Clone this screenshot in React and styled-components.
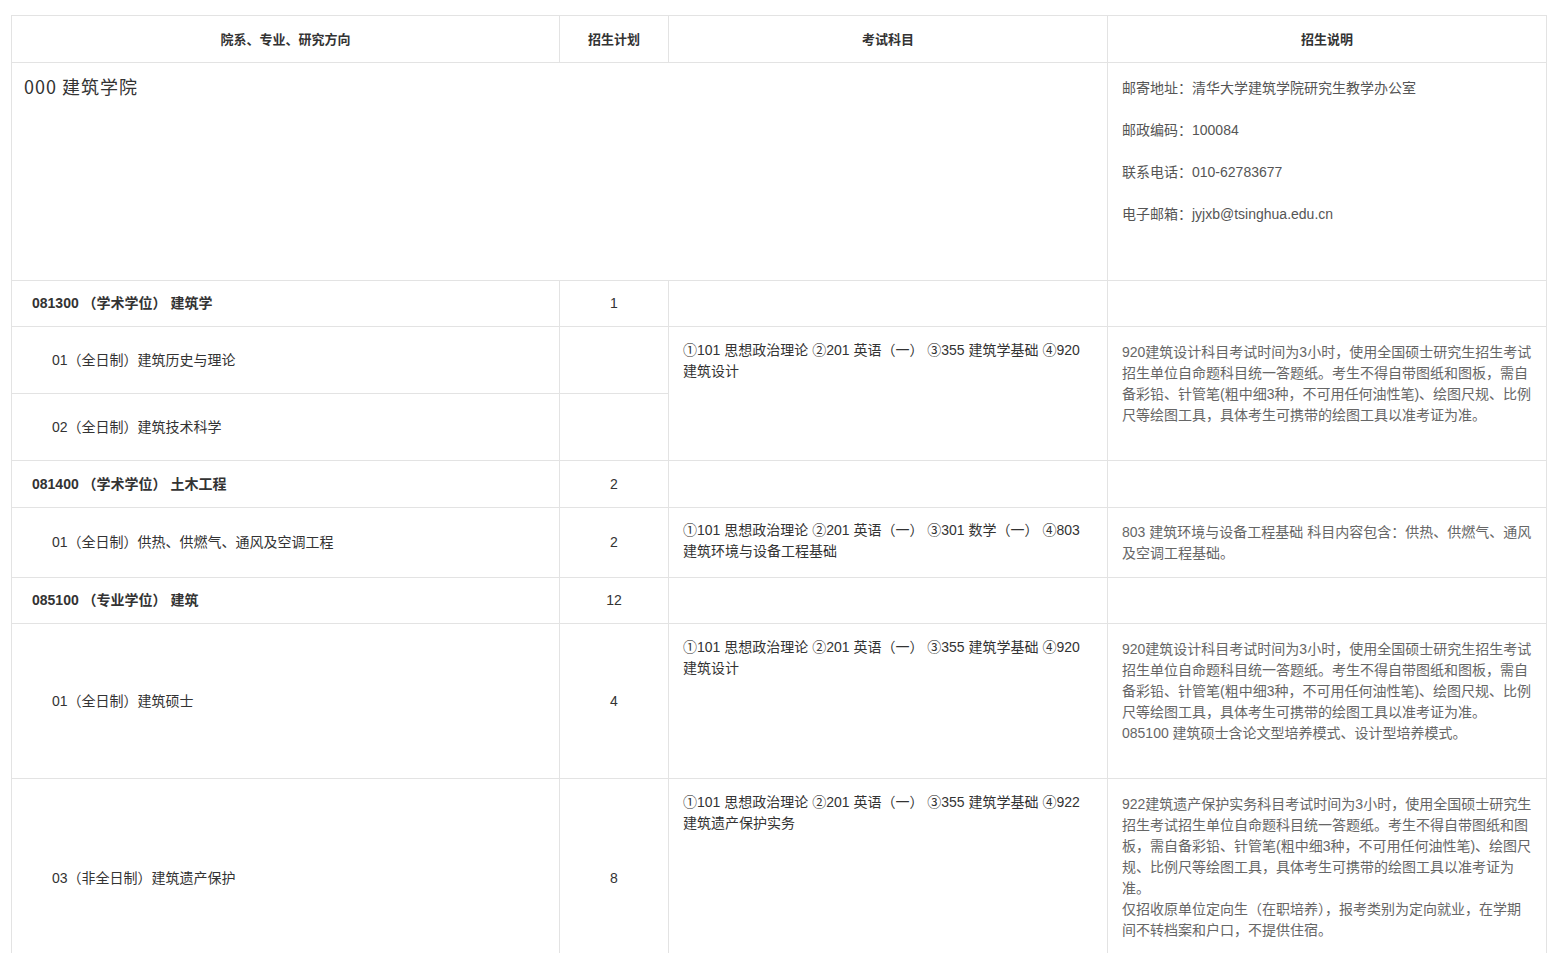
import React from "react";
import styled, { createGlobalStyle } from "styled-components";

const Global = createGlobalStyle`
  body { margin: 0; background: #fff; font-family: "Liberation Sans", "Noto Sans CJK SC", sans-serif; color: #333; }
`;
const Wrap = styled.div` padding: 15px 10px 0 11px; `;
const Table = styled.table`
  width: 1535px; border-collapse: collapse; table-layout: fixed; font-size: 14px; line-height: 21px;
  td, th { border: 1px solid #e3e3e3; vertical-align: ${p => "top"}; }
`;
const Th = styled.th`
  height: 44px; font-size: 13px; font-weight: bold; color: #333; text-align: center; vertical-align: middle !important;
`;
const Cell = styled.td`
  height: ${p => p.h}px; padding: ${p => p.pt ?? 0}px 14px 0 ${p => p.pl ?? 14}px;
  vertical-align: ${p => (p.mid ? "middle" : "top")} !important;
  text-align: ${p => (p.center ? "center" : "left")};
  color: ${p => (p.grey ? "#666" : "#333")};
  font-weight: ${p => (p.bold ? "bold" : "normal")};
  box-sizing: border-box;
`;
const Title = styled.div` font-size: 18px; font-family: "Noto Sans CJK SC", serif; margin-top: 3px; letter-spacing: 1px; `;
const Info = styled.p` margin: 0 0 21px; color: #555; `;

const exam920 = "①101 思想政治理论 ②201 英语（一） ③355 建筑学基础 ④920 建筑设计";
const note920 = "920建筑设计科目考试时间为3小时，使用全国硕士研究生招生考试招生单位自命题科目统一答题纸。考生不得自带图纸和图板，需自备彩铅、针管笔(粗中细3种，不可用任何油性笔)、绘图尺规、比例尺等绘图工具，具体考生可携带的绘图工具以准考证为准。";

export default function App() {
  return (
    <Wrap>
      <Global />
      <Table>
        <colgroup>
          <col style={{ width: 548 }} /><col style={{ width: 109 }} /><col style={{ width: 439 }} /><col style={{ width: 439 }} />
        </colgroup>
        <thead>
          <tr><Th>院系、专业、研究方向</Th><Th>招生计划</Th><Th>考试科目</Th><Th>招生说明</Th></tr>
        </thead>
        <tbody>
          <tr>
            <Cell h={218} pl={12} pt={10} colSpan={3}><Title>000 建筑学院</Title></Cell>
            <Cell h={218} pl={14} pt={15} grey><Info>邮寄地址：清华大学建筑学院研究生教学办公室</Info><Info>邮政编码：100084</Info><Info>联系电话：010-62783677</Info><Info>电子邮箱：jyjxb@tsinghua.edu.cn</Info></Cell>
          </tr>
          <tr><Cell h={46} mid bold pl={20}>081300 （学术学位） 建筑学</Cell><Cell h={46} mid center>1</Cell><Cell h={46} /><Cell h={46} /></tr>
          <tr>
            <Cell h={67} mid pl={40}>01（全日制）建筑历史与理论</Cell><Cell h={67} />
            <Cell rowSpan={2} h={134} pt={13}>{exam920}</Cell>
            <Cell rowSpan={2} h={134} pt={15} grey>{note920}</Cell>
          </tr>
          <tr><Cell h={67} mid pl={40}>02（全日制）建筑技术科学</Cell><Cell h={67} /></tr>
          <tr><Cell h={47} mid bold pl={20}>081400 （学术学位） 土木工程</Cell><Cell h={47} mid center>2</Cell><Cell h={47} /><Cell h={47} /></tr>
          <tr>
            <Cell h={70} mid pl={40}>01（全日制）供热、供燃气、通风及空调工程</Cell><Cell h={70} mid center>2</Cell>
            <Cell h={70} pt={12}>①101 思想政治理论 ②201 英语（一） ③301 数学（一） ④803 建筑环境与设备工程基础</Cell>
            <Cell h={70} pt={14} grey>803 建筑环境与设备工程基础 科目内容包含：供热、供燃气、通风及空调工程基础。</Cell>
          </tr>
          <tr><Cell h={46} mid bold pl={20}>085100 （专业学位） 建筑</Cell><Cell h={46} mid center>12</Cell><Cell h={46} /><Cell h={46} /></tr>
          <tr>
            <Cell h={155} mid pl={40}>01（全日制）建筑硕士</Cell><Cell h={155} mid center>4</Cell>
            <Cell h={155} pt={13}>{exam920}</Cell>
            <Cell h={155} pt={15} grey>{note920}<br />085100 建筑硕士含论文型培养模式、设计型培养模式。</Cell>
          </tr>
          <tr>
            <Cell h={200} mid pl={40}>03（非全日制）建筑遗产保护</Cell><Cell h={200} mid center>8</Cell>
            <Cell h={200} pt={13}>①101 思想政治理论 ②201 英语（一） ③355 建筑学基础 ④922 建筑遗产保护实务</Cell>
            <Cell h={200} pt={15} grey>922建筑遗产保护实务科目考试时间为3小时，使用全国硕士研究生招生考试招生单位自命题科目统一答题纸。考生不得自带图纸和图板，需自备彩铅、针管笔(粗中细3种，不可用任何油性笔)、绘图尺规、比例尺等绘图工具，具体考生可携带的绘图工具以准考证为准。<br />仅招收原单位定向生（在职培养），报考类别为定向就业，在学期间不转档案和户口，不提供住宿。</Cell>
          </tr>
        </tbody>
      </Table>
    </Wrap>
  );
}
